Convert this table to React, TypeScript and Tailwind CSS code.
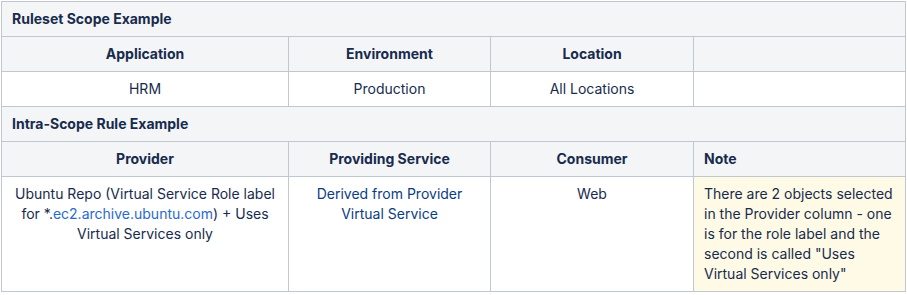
import React from "react";

const th = "border border-[#c1c7d0] bg-[#f4f5f7] px-[10px] py-[7px] font-bold text-[#172b4d]";
const td = "border border-[#c1c7d0] bg-white px-[10px] py-[7px] align-top text-[#172b4d]";

export default function App() {
  return (
    <div className="bg-white pl-[1px] pt-[1px] text-[14px] leading-[20px]" style={{ fontFamily: "Inter, 'Noto Sans', sans-serif" }}>
      <table className="w-[904px] border-collapse table-fixed">
        <colgroup>
          <col className="w-[287px]" />
          <col className="w-[202px]" />
          <col className="w-[203px]" />
          <col className="w-[212px]" />
        </colgroup>
        <tbody>
          <tr>
            <th colSpan={4} className={`${th} text-left`}>Ruleset Scope Example</th>
          </tr>
          <tr>
            <th className={`${th} text-center`}>Application</th>
            <th className={`${th} text-center`}>Environment</th>
            <th className={`${th} text-center`}>Location</th>
            <th className={`${th} text-center`}></th>
          </tr>
          <tr>
            <td className={`${td} text-center`}>HRM</td>
            <td className={`${td} text-center`}>Production</td>
            <td className={`${td} text-center`}>All Locations</td>
            <td className={`${td}`}></td>
          </tr>
          <tr>
            <th colSpan={4} className={`${th} text-left`}>Intra-Scope Rule Example</th>
          </tr>
          <tr>
            <th className={`${th} text-center`}>Provider</th>
            <th className={`${th} text-center`}>Providing Service</th>
            <th className={`${th} text-center`}>Consumer</th>
            <th className={`${th} text-left`}>Note</th>
          </tr>
          <tr>
            <td className={`${td} text-center`}>
              Ubuntu Repo (Virtual Service Role label for *.<span className="text-[#2a6acb]">ec2.archive.ubuntu.com</span>) + Uses Virtual Services only
            </td>
            <td className={`${td} text-center`}>
              <span className="text-[#0b3d82]">Derived from Provider Virtual Service</span>
            </td>
            <td className={`${td} text-center`}>Web</td>
            <td className={`${td} !bg-[#fffae6] text-left`}>
              There are 2 objects selected in the Provider column - one is for the role label and the second is called "Uses Virtual Services only"
            </td>
          </tr>
        </tbody>
      </table>
    </div>
  );
}
